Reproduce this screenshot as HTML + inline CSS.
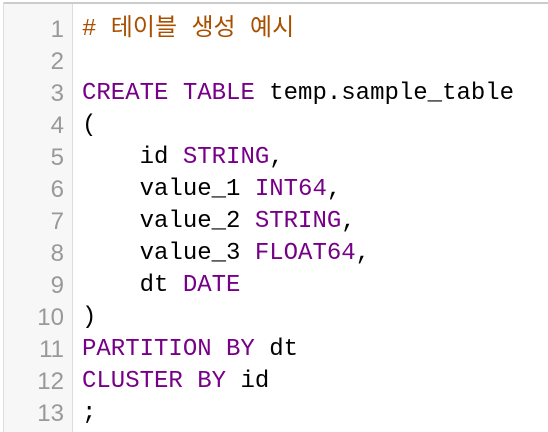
<!DOCTYPE html>
<html><head><meta charset="utf-8"><style>
html,body{margin:0;padding:0;background:#fff;width:548px;height:432px;overflow:hidden}
.top{position:absolute;left:3px;top:2px;width:545px;height:2px;background:#ccc}
.lb{position:absolute;left:3px;top:2px;width:1px;height:430px;background:#ddd}
.g{position:absolute;left:4px;top:4px;width:68px;height:428px;background:#f7f7f7;border-right:1px solid #ddd}
.ln{position:absolute;left:0;width:64px;text-align:right;color:#999;font:24px "Liberation Sans",sans-serif;line-height:32px}
.c{position:absolute;left:82px;font:24px "Liberation Mono","Noto Sans CJK KR",monospace;line-height:32px;white-space:pre;color:#000}
.k{color:#770088}.m{color:#a85000}
</style></head><body>
<div class="top"></div><div class="lb"></div><div class="g"></div>
<div class="ln" style="top:14px">1<br>2<br>3<br>4<br>5<br>6<br>7<br>8<br>9<br>10<br>11<br>12<br>13</div>
<div class="c" style="top:14px"><span class="m"># 테이블 생성 예시</span>

<span class="k">CREATE</span> <span class="k">TABLE</span> temp.sample_table
(
    id <span class="k">STRING</span>,
    value_1 <span class="k">INT64</span>,
    value_2 <span class="k">STRING</span>,
    value_3 <span class="k">FLOAT64</span>,
    dt <span class="k">DATE</span>
)
<span class="k">PARTITION</span> <span class="k">BY</span> dt
<span class="k">CLUSTER</span> <span class="k">BY</span> id
;</div>
</body></html>
